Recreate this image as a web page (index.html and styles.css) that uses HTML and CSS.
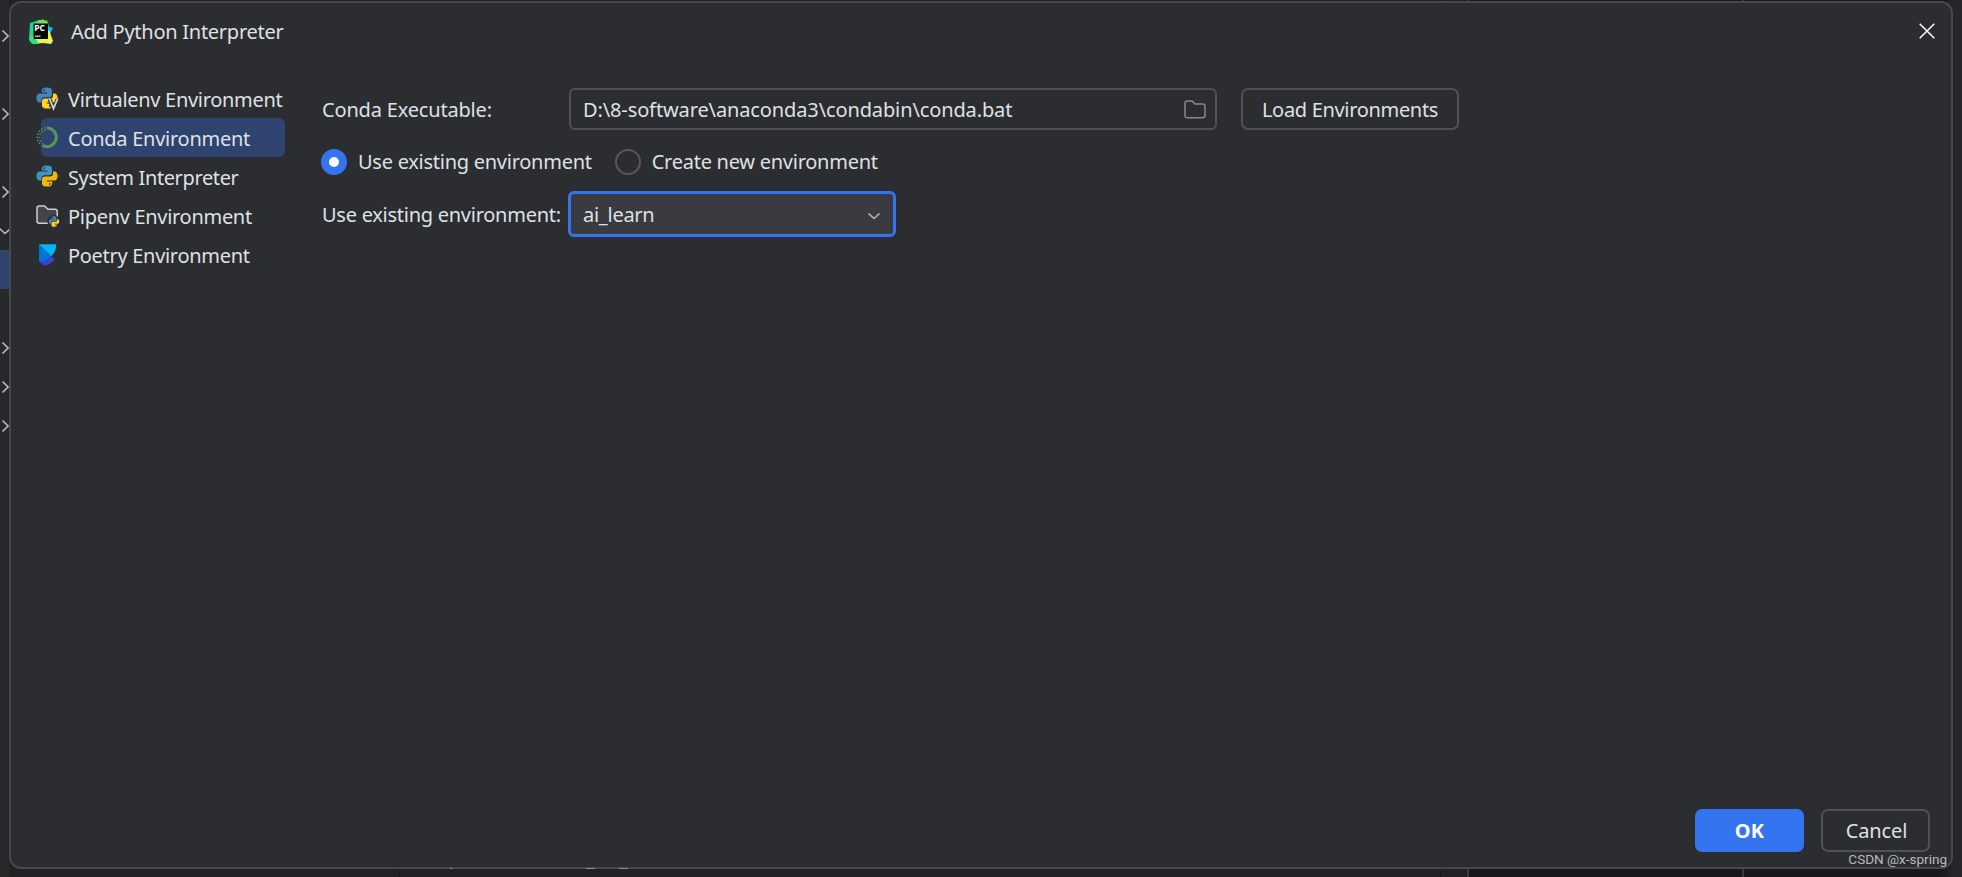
FILE: index.html
```html
<!DOCTYPE html>
<html lang="en">
<head>
    <meta charset="UTF-8">
    <meta name="viewport" content="width=device-width, initial-scale=1.0">
    <title>Add Python Interpreter</title>
    <link rel="stylesheet" href="styles.css">
</head>
<body>

<svg class="defs" width="0" height="0">
    <symbol id="right" viewBox="0 0 8 14"><path d="M1.5 1.5L7 7L1.5 12.5" fill="none" stroke="currentColor" stroke-width="1.6"/></symbol>
    <symbol id="down" viewBox="0 0 14 8"><path d="M1.5 1.5L7 6.5L12.5 1.5" fill="none" stroke="currentColor" stroke-width="1.6"/></symbol>
    <symbol id="snake" viewBox="0 0 22 22">
        <path class="snake-top" d="M10.8 0.5C7 0.5 5.8 1.6 5.8 3.6V5.6H11.2V6.4H3.8C1.5 6.4 0.4 8.4 0.4 11C0.4 13.8 1.6 15.6 3.6 15.6H5.5V13C5.5 11.2 6.8 10.2 8.5 10.2H13.2C15 10.2 16 9 16 7.5V3.6C16 1.5 14.5 0.5 10.8 0.5Z"/>
        <path class="snake-bottom" d="M11.2 21.5C15 21.5 16.2 20.4 16.2 18.4V16.4H10.8V15.6H18.2C20.5 15.6 21.6 13.6 21.6 11C21.6 8.2 20.4 6.4 18.4 6.4H17V8.8C17 10.6 15.7 11.6 14 11.6H8.8C7 11.6 6 12.8 6 14.3V18.4C6 20.5 7.5 21.5 11.2 21.5Z"/>
        <circle cx="8.1" cy="3.1" r="0.9" fill="#2b2d30"/>
        <circle cx="13.9" cy="18.9" r="0.9" fill="#2b2d30"/>
    </symbol>
</svg>

<div class="tree">
    <div class="tree-row"><svg width="8" height="14"><use href="#right"/></svg></div>
    <div class="tree-row"></div>
    <div class="tree-row"><svg width="8" height="14"><use href="#right"/></svg></div>
    <div class="tree-row"></div>
    <div class="tree-row"><svg width="8" height="14"><use href="#right"/></svg></div>
    <div class="tree-row open"><svg width="14" height="8"><use href="#down"/></svg></div>
    <div class="tree-row current"></div>
    <div class="tree-row"></div>
    <div class="tree-row"><svg width="8" height="14"><use href="#right"/></svg></div>
    <div class="tree-row"><svg width="8" height="14"><use href="#right"/></svg></div>
    <div class="tree-row"><svg width="8" height="14"><use href="#right"/></svg></div>
</div>

<div class="dialog">
    <div class="titlebar">
        <svg class="logo" width="26" height="26" viewBox="0 0 26 26">
            <path d="M2 4L10 1.5L15 0.5L20 3L21 9L16 22L4 25L1 21Z" fill="#21d789"/>
            <path d="M20 7L25 9L22 15L17 11Z" fill="#07c3f2"/>
            <path d="M10 1.5L15 0.5L17 2L19 1L20 7L8 8Z" fill="#70e04b"/>
            <path d="M3 19L21 11L25 22L23 25L15 24L5 25Z" fill="#e8f454"/>
            <path d="M1 20L7 18L11 25H5Z" fill="#35df76"/>
            <rect x="5.5" y="4.5" width="14.5" height="15.5" fill="#080808"/>
            <text class="logo-text" x="6.2" y="12.2">PC</text>
            <path d="M7 17.2H12.5" stroke="#fff" stroke-width="1"/>
        </svg>
        <span class="title">Add Python Interpreter</span>
        <svg class="close" width="16" height="16" viewBox="0 0 16 16"><path d="M0.7 0.7L15.3 15.3M15.3 0.7L0.7 15.3" stroke="#fff" stroke-width="1.5"/></svg>
    </div>

    <div class="content">
        <div class="nav">
            <div class="nav-item">
                <svg width="24" height="24" viewBox="0 0 24 24">
                    <use href="#snake" width="22" height="22"/>
                    <path d="M13.6 12L17.3 22L21.8 12" fill="none" stroke="#2b2d30" stroke-width="4"/>
                    <path d="M13.4 11.5L17.5 21.5L21.7 11.5" fill="none" stroke="#ced0d6" stroke-width="1.9"/>
                </svg>
                <span>Virtualenv Environment</span>
            </div>
            <div class="nav-item selected">
                <svg width="24" height="24" viewBox="0 0 24 24">
                    <path d="M11 2A9.3 9.3 0 1 1 6.4 19.4" fill="none" stroke="#57965c" stroke-width="3"/>
                    <path d="M9.7 1.7A9.8 9.8 0 0 0 5.5 19.4" fill="none" stroke="#57965c" stroke-width="1.5" stroke-dasharray="1.7 1.5"/>
                    <path d="M10 4A7.6 7.6 0 0 0 6.5 17.5" fill="none" stroke="#57965c" stroke-width="1.3" stroke-dasharray="1.5 1.8"/>
                </svg>
                <span>Conda Environment</span>
            </div>
            <div class="nav-item system">
                <svg width="24" height="24" viewBox="0 0 24 24"><use href="#snake" width="22" height="22"/></svg>
                <span>System Interpreter</span>
            </div>
            <div class="nav-item">
                <svg width="24" height="24" viewBox="0 0 24 24">
                    <path d="M1 4.5C1 3 2 2 3.3 2H8.6L12 5.2H19C20.3 5.2 21.2 6 21.2 7.4V17C21.2 18.3 20.3 19.2 19 19.2H3.3C2 19.2 1 18.3 1 17Z" fill="#43454a" stroke="#ced0d6" stroke-width="1.5"/>
                    <circle cx="17.7" cy="17.4" r="6.3" fill="#2b2d30"/>
                    <use href="#snake" x="12.5" y="12" width="11" height="11"/>
                </svg>
                <span>Pipenv Environment</span>
            </div>
            <div class="nav-item">
                <svg width="24" height="24" viewBox="0 0 24 24">
                    <path d="M3 17.5L15.2 13L18.5 16.5C15.8 20.3 12.2 22.4 8.3 22.4C6 21.5 4 19.8 3 17.5Z" fill="#3b43cc"/>
                    <path d="M3 1.3L15.2 13C12 16.3 8 18.2 3 18.4Z" fill="#0073dc"/>
                    <path d="M3 1.3H20.3C20.3 6.2 18.5 10.2 15.2 13Z" fill="#00b8f1"/>
                </svg>
                <span>Poetry Environment</span>
            </div>
        </div>

        <div class="form">
            <div class="form-row executable">
                <label class="label">Conda Executable:</label>
                <div class="input">
                    <span>D:\8-software\anaconda3\condabin\conda.bat</span>
                    <svg width="22" height="19" viewBox="0 0 22 19"><path d="M1 3.2C1 1.8 1.8 1 3.2 1H8L11 4H18.8C20.2 4 21 4.8 21 6.2V15.6C21 17 20.2 17.8 18.8 17.8H3.2C1.8 17.8 1 17 1 15.6Z" fill="none" stroke="#868a91" stroke-width="1.5"/></svg>
                </div>
                <div class="btn load">Load Environments</div>
            </div>
            <div class="form-row radios">
                <span class="radio checked"></span>
                <span class="radio-label">Use existing environment</span>
                <span class="radio"></span>
                <span class="radio-label">Create new environment</span>
            </div>
            <div class="form-row existing">
                <label class="label">Use existing environment:</label>
                <div class="select">
                    <span>ai_learn</span>
                    <svg width="14" height="8"><use href="#down"/></svg>
                </div>
            </div>
        </div>
    </div>

    <div class="footer">
        <div class="btn primary">OK</div>
        <div class="btn cancel">Cancel</div>
    </div>
</div>

<div class="watermark">CSDN @x-spring</div>

<!-- tips of the code line that stick out under the dialog -->
<svg class="code-line" width="180" height="1">
    <path d="M0 0.5H2M136 0.5H145M169 0.5H178" stroke="#8d8f93"/>
</svg>

</body>
</html>
```

FILE: styles.css
```css
body {
    margin: 0;
    height: 877px;
    overflow: hidden;
    display: flex;
    background: linear-gradient(to right, #202223 399px, #17191a 399px, #17191a 400px, #202223 400px, #202223 1440px, #161718 1440px, #161718 1441px, #202223 1441px, #202223 1467px, #393b3d 1467px, #393b3d 1469px, #17181a 1469px, #17181a 1742px, #36383a 1742px, #36383a 1744px, #18191b 1744px, #18191b 1940px, #242629 1953px);
    color: #dfe1e5;
    font-family: "Noto Sans", "Open Sans", sans-serif;
    font-size: 20px;
    line-height: 26px;
    letter-spacing: -0.26px;
    white-space: nowrap;
}
.defs {
    position: absolute;
}
.tree {
    width: 9px;
    padding-top: 16px;
    background-color: #26282a;
    overflow: hidden;
    color: #b4b8bf;
}
.tree-row {
    height: 39px;
    display: flex;
    align-items: center;
    padding-left: 1px;
}
.tree-row svg {
    flex: none;
}
.tree-row.open {
    padding-left: 0;
    margin-left: -2px;
}
.tree-row.current {
    background-color: #2e436e;
}
.dialog {
    box-sizing: border-box;
    width: 1944px;
    height: 868px;
    margin-top: 1px;
    border: 2px solid #46484a;
    border-radius: 12px;
    background-color: #2b2d30;
    display: flex;
    flex-direction: column;
}
.titlebar {
    height: 58px;
    display: flex;
    align-items: center;
    padding: 0 16px 0 17px;
}
.title {
    margin-left: 17px;
}
.logo-text {
    font-family: "Open Sans", sans-serif;
    font-size: 8.5px;
    font-weight: bold;
    letter-spacing: 0;
    fill: #fff;
}
.close {
    margin-left: auto;
    margin-bottom: 2px;
}
.content {
    flex: 1;
    display: flex;
    padding-top: 18px;
}
.nav {
    width: 244px;
    margin-left: 30px;
    letter-spacing: -0.3px;
}
.nav-item {
    height: 39px;
    display: flex;
    align-items: center;
    border-radius: 6px;
}
.nav-item svg {
    flex: none;
    margin-left: -5px;
    margin-right: 8px;
}
.nav-item span {
    padding-top: 2px;
}
.nav-item.selected {
    background-color: #2e436e;
    letter-spacing: -0.26px;
}
.snake-top {
    fill: var(--snake-top, #4584b6);
}
.snake-bottom {
    fill: var(--snake-bottom, #ffd22e);
}
.system {
    --snake-top: #3f95c2;
    --snake-bottom: #eeb90a;
    letter-spacing: -0.38px;
}
.form {
    margin-left: 37px;
    padding-top: 9px;
}
.form-row {
    display: flex;
    align-items: center;
}
.label {
    width: 247px;
}
.executable .label {
    padding-top: 2px;
    letter-spacing: -0.18px;
}
.input {
    box-sizing: border-box;
    width: 648px;
    height: 42px;
    padding: 0 9px 0 12px;
    border: 2px solid #4e5157;
    border-radius: 6px;
    display: flex;
    align-items: center;
    justify-content: space-between;
}
.input span {
    padding-top: 2px;
    letter-spacing: -0.12px;
}
.btn {
    box-sizing: border-box;
    height: 42px;
    border: 2px solid #4e5157;
    border-radius: 7px;
    display: flex;
    align-items: center;
    justify-content: center;
}
.load {
    width: 218px;
    margin-left: 24px;
    padding-top: 2px;
    letter-spacing: -0.32px;
}
.radios {
    box-sizing: border-box;
    height: 61px;
    padding-top: 3px;
}
.radio {
    box-sizing: border-box;
    width: 26px;
    height: 26px;
    margin-left: -1px;
    border: 2px solid #55585e;
    border-radius: 50%;
}
.radio.checked {
    border: 8px solid #3574f0;
    background-color: #fff;
}
.radio-label {
    margin-left: 11px;
    margin-right: 24px;
}
.existing .label {
    width: 246px;
    padding-top: 2px;
}
.select {
    box-sizing: border-box;
    width: 328px;
    height: 46px;
    padding: 0 12px;
    border: 3px solid #3574f0;
    border-radius: 6px;
    background-color: #393b40;
    display: flex;
    align-items: center;
    justify-content: space-between;
}
.select span {
    padding-top: 2px;
}
.select svg {
    color: #b4b8bf;
    margin-top: 3px;
}
.footer {
    display: flex;
    justify-content: flex-end;
    padding: 0 21px 15px 0;
}
.primary {
    width: 109px;
    height: 43px;
    margin-right: 17px;
    border: none;
    background-color: #3574f0;
    color: #fff;
    font-weight: bold;
    letter-spacing: 0.3px;
}
.cancel {
    width: 109px;
    height: 43px;
    padding: 1px 0 0 2px;
    letter-spacing: -0.1px;
}
.watermark {
    position: absolute;
    right: 15px;
    bottom: 9px;
    font-family: Roboto, sans-serif;
    font-size: 13.5px;
    line-height: 18px;
    letter-spacing: 0;
    color: #b9babc;
}
.code-line {
    position: absolute;
    left: 450px;
    top: 868px;
}
```
